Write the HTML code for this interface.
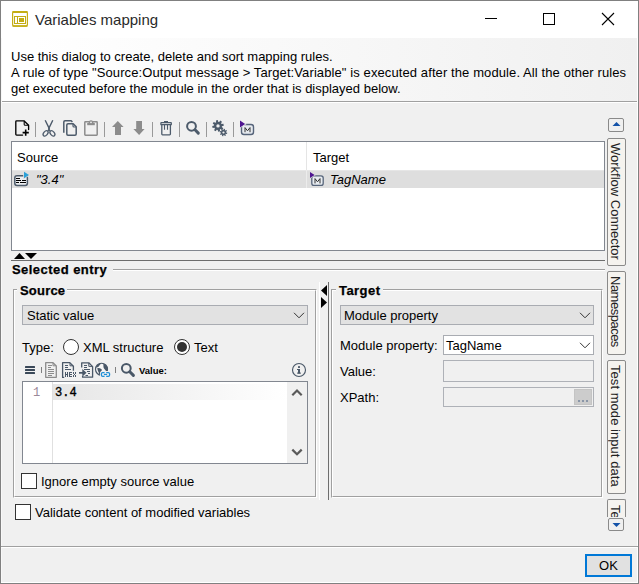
<!DOCTYPE html>
<html><head><meta charset="utf-8">
<style>
*{margin:0;padding:0;box-sizing:border-box}
html,body{width:639px;height:584px;overflow:hidden;background:#f0f0f0}
body{position:relative;font-family:"Liberation Sans",sans-serif;font-size:13px;color:#000}
.a{position:absolute}
.t{position:absolute;white-space:pre;line-height:16px;font-size:13px}
.b{font-weight:bold;letter-spacing:0.45px;-webkit-text-stroke:0.25px #000}
.hl{position:absolute;height:1px}
.vl{position:absolute;width:1px}
svg{position:absolute;overflow:visible}
.tab{position:absolute;left:607px;width:19px;background:#f5f3ef;border:1px solid #8a8a8a;border-radius:2px;overflow:hidden}
.tabtxt{position:absolute;white-space:pre;font-size:13px;line-height:16px;transform-origin:0 0;transform:rotate(90deg);color:#222}
</style></head><body>
<!-- window frame -->
<div class="a" style="left:0;top:0;width:639px;height:584px;border:1px solid #808080"></div>
<div class="a" style="left:1px;top:1px;width:637px;height:37px;background:#fff"></div>
<!-- title icon -->
<svg style="left:0;top:0" width="40" height="40">
  <rect x="12.6" y="11.6" width="14.8" height="14.6" rx="1.6" fill="#fff" stroke="#c4ad14" stroke-width="1.2"/>
  <rect x="12.3" y="11" width="15.4" height="2" rx="0.8" fill="#c4ad14"/>
  <rect x="12.3" y="25.2" width="15.4" height="1.6" rx="0.8" fill="#c4ad14"/>
  <rect x="14.5" y="16.5" width="11" height="7" fill="none" stroke="#c4ad14" stroke-width="1"/>
  <rect x="17" y="16" width="1" height="8" fill="#c4ad14"/>
  <rect x="19" y="18" width="5" height="4" fill="#c4ad14"/>
</svg>
<div class="t" style="left:35px;top:11px;font-size:15px;line-height:18px;color:#2a2a2a">Variables mapping</div>
<!-- title buttons -->
<div class="hl" style="left:485px;top:18px;width:12px;background:#000"></div>
<div class="a" style="left:543px;top:13px;width:12px;height:12px;border:1px solid #000"></div>
<svg style="left:0;top:0" width="639" height="40">
  <path d="M602 13 L614 25 M614 13 L602 25" stroke="#000" stroke-width="1.1"/>
</svg>
<!-- description -->
<div class="a" style="left:1px;top:38px;width:637px;height:63px;background:linear-gradient(to right,#fff 0%,#fff 5%,#f0f0f0 100%)"></div>
<div class="t" style="left:11px;top:49px">Use this dialog to create, delete and sort mapping rules.</div>
<div class="t" style="left:11px;top:65px;letter-spacing:0.1px">A rule of type "Source:Output message &gt; Target:Variable" is executed after the module. All the other rules</div>
<div class="t" style="left:11px;top:81px">get executed before the module in the order that is displayed below.</div>
<div class="hl" style="left:1px;top:101px;width:637px;background:#a0a0a0"></div>
<div class="hl" style="left:1px;top:102px;width:637px;background:#fff"></div>
<div class="vl" style="left:1px;top:38px;height:545px;background:#f8f8f8"></div>
<div class="vl" style="left:637px;top:38px;height:545px;background:#fff"></div>
<div class="hl" style="left:1px;top:582px;width:637px;background:#fff"></div>

<!-- main toolbar -->
<svg style="left:0;top:0" width="639" height="150">
  <g fill="none" stroke="#000" stroke-width="1.35" stroke-linecap="round" stroke-linejoin="round">
    <path d="M22.6 135.1 H16.6 Q15.8 135.1 15.8 134.3 V121.7 Q15.8 120.9 16.6 120.9 H24.2 L28.6 125.3 V129.6"/>
    <path d="M24.2 121.2 V124.4 Q24.2 125.3 25.1 125.3 H28.3" stroke-width="1.1"/>
    <path d="M22.6 132.6 H28.8 M25.7 129.4 V135.8" stroke-linecap="butt" stroke-width="1.6"/>
  </g>
  <g fill="#999"><rect x="35" y="122" width="1" height="15"/><rect x="104" y="122" width="1" height="15"/><rect x="152" y="122" width="1" height="15"/><rect x="179" y="122" width="1" height="15"/><rect x="206" y="122" width="1" height="15"/><rect x="233" y="122" width="1" height="15"/></g>
  <g fill="none" stroke="#4d5b6b" stroke-width="1.5">
    <path d="M45.2 120.3 L49.3 128.6 L48 131 M52.8 120.3 L48.7 128.6 L50 131" stroke-width="1.4"/>
    <ellipse cx="45.6" cy="133.4" rx="1.9" ry="3.1" transform="rotate(40 45.6 133.4)" stroke-width="1.3"/>
    <ellipse cx="52.4" cy="133.4" rx="1.9" ry="3.1" transform="rotate(-40 52.4 133.4)" stroke-width="1.3"/>
    <path d="M63.8 132.8 V122 Q63.8 120.8 65 120.8 H71.2 L72.4 122" stroke-linejoin="round"/>
    <path d="M66.8 134 V125 Q66.8 123.8 68 123.8 H73.2 L76.2 126.8 V134 Q76.2 135.2 75 135.2 H68 Q66.8 135.2 66.8 134 Z" stroke-linejoin="round"/>
    <path d="M73 124 V126 Q73 127 74 127 H76" stroke-width="1.2"/>
  </g>
  <g fill="none" stroke="#8c8c8c" stroke-width="1.5">
    <rect x="84.8" y="121.8" width="12.4" height="13.4" rx="0.6"/>
  </g>
  <g fill="#8c8c8c">
    <rect x="87.2" y="123" width="7.6" height="2.2"/>
    <path d="M88.6 123.2 Q88.6 120.2 91 120.2 Q93.4 120.2 93.4 123.2 Z"/>
    <path d="M112 127 L117.8 121 L123.6 127 H121 V135 H115 V127 Z"/>
    <path d="M136.2 121 H142 V129 H144.6 L139.1 135 L133.4 129 H136.2 Z"/>
  </g>
  <circle cx="91" cy="122.3" r="0.9" fill="#f0f0f0"/>
  <g fill="none" stroke="#4d5b6b" stroke-width="1.5">
    <rect x="160.9" y="122.7" width="10.4" height="2" rx="0.3" stroke-width="1.25"/>
    <path d="M161.8 125 V134.1 Q161.8 134.8 162.5 134.8 H169.7 Q170.4 134.8 170.4 134.1 V125" stroke-width="1.3"/>
    <path d="M164.5 125 V129.8 M167.5 125 V129.8" stroke-width="1.1"/>
  </g>
  <rect x="164" y="121" width="4" height="1.4" fill="#4d5b6b"/>
  <g fill="none" stroke="#4d5b6b">
    <circle cx="191.5" cy="126.3" r="4.4" stroke-width="2"/>
    <path d="M195 129.8 L198.3 133.1" stroke-width="3" stroke-linecap="round"/>
  </g>
  <g fill="#4d5b6b">
    <path d="M221.54 124.04 L223.42 123.83 L223.80 125.70 L221.99 126.24 L221.82 127.08 L223.29 128.27 L222.24 129.85 L220.58 128.96 L219.86 129.44 L220.07 131.32 L218.20 131.70 L217.66 129.89 L216.82 129.72 L215.63 131.19 L214.05 130.14 L214.94 128.48 L214.46 127.76 L212.58 127.97 L212.20 126.10 L214.01 125.56 L214.18 124.72 L212.71 123.53 L213.76 121.95 L215.42 122.84 L216.14 122.36 L215.93 120.48 L217.80 120.10 L218.34 121.91 L219.18 122.08 L220.37 120.61 L221.95 121.66 L221.06 123.32 Z"/>
    <path d="M226.10 132.41 L227.29 132.82 L226.98 134.03 L225.74 133.83 L225.40 134.27 L225.95 135.41 L224.88 136.04 L224.14 135.02 L223.59 135.10 L223.18 136.29 L221.97 135.98 L222.17 134.74 L221.73 134.40 L220.59 134.95 L219.96 133.88 L220.98 133.14 L220.90 132.59 L219.71 132.18 L220.02 130.97 L221.26 131.17 L221.60 130.73 L221.05 129.59 L222.12 128.96 L222.86 129.98 L223.41 129.90 L223.82 128.71 L225.03 129.02 L224.83 130.26 L225.27 130.60 L226.41 130.05 L227.04 131.12 L226.02 131.86 Z"/>
  </g>
  <circle cx="218" cy="125.9" r="1.7" fill="#f0f0f0"/>
  <circle cx="223.5" cy="132.5" r="1.1" fill="#f0f0f0"/>
  <rect x="241.5" y="124.5" width="12" height="10" rx="2.5" fill="#e6eaef" stroke="#56647a" stroke-width="1.4"/>
  <path d="M245 132.2 V127.6 L247.5 130.8 L250 127.6 V132.2" fill="none" stroke="#333" stroke-width="1"/>
  <path d="M239.4 119.6 L246.6 124 L239.4 128.6 Z" fill="#f0f0f0"/>
  <path d="M240 120.6 L245.2 124 L240 127.4 Z" fill="#4e1590"/>
</svg>

<!-- table -->
<div class="a" style="left:11px;top:141px;width:594px;height:110px;background:#fff;border:1px solid #828790"></div>
<div class="vl" style="left:306px;top:142px;height:46px;background:#e5e5e5"></div>
<div class="a" style="left:12px;top:170px;width:592px;height:18px;background:#dedede;border-top:1px solid #e6e6e6"></div>
<div class="vl" style="left:306px;top:170px;height:18px;background:#ececec"></div>
<div class="t" style="left:17px;top:150px">Source</div>
<div class="t" style="left:313px;top:150px">Target</div>
<svg style="left:0;top:0" width="639" height="200">
  <rect x="14.8" y="175.8" width="12.6" height="9.6" rx="2.2" fill="#eceef1" stroke="#4d5b6b" stroke-width="1.5"/>
  <g fill="#000"><rect x="16" y="178" width="4" height="1"/><rect x="16" y="180" width="5" height="1"/><rect x="22" y="180" width="4" height="1"/><rect x="16" y="182" width="3" height="1"/><rect x="20" y="182" width="6" height="1"/></g>
  <path d="M23.2 170.8 L30.4 175 L23.2 179.2 Z" fill="#dedede"/>
  <path d="M24 171.8 L29 175 L24 178.2 Z" fill="#2aa0d8"/>
  <rect x="311.8" y="175.8" width="11.4" height="9.6" rx="2.2" fill="#e8ecf0" stroke="#56647a" stroke-width="1.3"/>
  <path d="M315 183.4 V178.6 L317.5 181.8 L320 178.6 V183.4" fill="none" stroke="#333" stroke-width="1"/>
  <path d="M309.4 171 L315.8 175 L309.4 179 Z" fill="#dedede"/>
  <path d="M310 172 L314.6 175 L310 178 Z" fill="#4e1590"/>
</svg>
<div class="t" style="left:36px;top:172px;font-style:italic">"3.4"</div>
<div class="t" style="left:330px;top:172px;font-style:italic">TagName</div>

<!-- side tabs -->
<div class="a" style="left:608px;top:118px;width:16px;height:14px;border:1px solid #8a8a8a;border-radius:2px;background:#f0f0f0"></div>
<svg style="left:0;top:0" width="639" height="584">
  <path d="M612.5 126 L616.5 122 L620.5 126 Z" fill="#1352a8"/>
</svg>
<div class="tab" style="top:138px;height:128px"><div class="tabtxt" style="left:15px;top:4px">Workflow Connector</div></div>
<div class="tab" style="top:271px;height:84px"><div class="tabtxt" style="left:15px;top:4px;letter-spacing:-0.5px">Namespaces</div></div>
<div class="tab" style="top:360px;height:134px"><div class="tabtxt" style="left:15px;top:4px;letter-spacing:0.05px">Test mode input data</div></div>
<div class="tab" style="top:499px;height:18px;border-bottom:none;border-radius:2px 2px 0 0"><div class="tabtxt" style="left:15px;top:5px">Te</div></div>
<div class="a" style="left:608px;top:518px;width:16px;height:13px;border:1px solid #8a8a8a;border-radius:2px;background:#f0f0f0"></div>
<svg style="left:0;top:0" width="639" height="584">
  <path d="M612.5 523 L616.5 527 L620.5 523 Z" fill="#1352a8"/>
</svg>

<!-- splitter -->
<svg style="left:0;top:0" width="639" height="584">
  <path d="M14 259 L19.5 253 L25 259 Z" fill="#000"/>
  <path d="M25 253 L37 253 L31 259 Z" fill="#000"/>
</svg>
<div class="hl" style="left:11px;top:260px;width:594px;background:#6d6d6d"></div>
<div class="t b" style="left:12px;top:262px">Selected entry</div>
<div class="hl" style="left:113px;top:269px;width:492px;background:#a0a0a0"></div>
<div class="hl" style="left:113px;top:270px;width:492px;background:#fff"></div>

<!-- source group -->
<div class="a" style="left:13px;top:289px;width:304px;height:209px;border:1px solid #a0a0a0;border-right-color:#fff;border-bottom-color:#fff;"></div>
<div class="a" style="left:14px;top:290px;width:302px;height:207px;border:1px solid #fff;border-right-color:#a0a0a0;border-bottom-color:#a0a0a0;"></div>
<div class="a" style="left:17px;top:284px;width:50px;height:10px;background:#f0f0f0"></div>
<div class="t b" style="left:20px;top:283px;letter-spacing:0.2px">Source</div>

<!-- vertical splitter -->
<div class="vl" style="left:319px;top:282px;height:218px;background:#fff"></div>
<div class="vl" style="left:328px;top:282px;height:218px;background:#6d6d6d"></div>
<svg style="left:0;top:0" width="639" height="584">
  <path d="M327 285 L321 290.5 L327 296 Z" fill="#000"/>
  <path d="M321 297 L327 302.5 L321 308 Z" fill="#000"/>
</svg>

<!-- target group -->
<div class="a" style="left:331px;top:289px;width:272px;height:209px;border:1px solid #a0a0a0;border-right-color:#fff;border-bottom-color:#fff;"></div>
<div class="a" style="left:332px;top:290px;width:270px;height:207px;border:1px solid #fff;border-right-color:#a0a0a0;border-bottom-color:#a0a0a0;"></div>
<div class="a" style="left:336px;top:284px;width:47px;height:10px;background:#f0f0f0"></div>
<div class="t b" style="left:339px;top:283px">Target</div>

<!-- source combobox -->
<div class="a" style="left:22px;top:305px;width:286px;height:20px;background:#e2e2e2;border:1px solid #a9acb2"></div>
<div class="t" style="left:27px;top:308px">Static value</div>
<svg style="left:0;top:0" width="639" height="584">
  <path d="M294 312.8 L299 317.8 L304 312.8" fill="none" stroke="#333" stroke-width="1"/>
</svg>

<!-- type row -->
<div class="t" style="left:22px;top:340px">Type:</div>
<svg style="left:0;top:0" width="639" height="584">
  <circle cx="71" cy="347" r="7.5" fill="#fff" stroke="#333" stroke-width="1"/>
  <circle cx="182" cy="347" r="7.5" fill="#fff" stroke="#333" stroke-width="1"/>
  <circle cx="182" cy="347" r="5" fill="#333"/>
</svg>
<div class="t" style="left:83px;top:340px">XML structure</div>
<div class="t" style="left:194px;top:340px">Text</div>

<!-- editor toolbar -->
<svg style="left:0;top:0" width="639" height="584">
  <g fill="#3a4858"><rect x="25" y="366" width="10" height="2" rx="0.5"/><rect x="25" y="369" width="10" height="2" rx="0.5"/><rect x="25" y="372" width="10" height="2" rx="0.5"/></g>
  <rect x="41" y="367" width="1" height="6" fill="#808080"/>
  <rect x="115" y="367" width="1" height="6" fill="#808080"/>
  <g fill="none" stroke="#8c8c8c" stroke-width="1.3" stroke-linejoin="round">
    <path d="M45.7 362.7 H53 L56.3 366 V377.3 H45.7 Z"/>
    <path d="M53 362.9 V365.8 H56.1" stroke-width="1"/>
  </g>
  <g fill="#8c8c8c"><rect x="48" y="365" width="4" height="1"/><rect x="48" y="367" width="3" height="1"/><rect x="48" y="369" width="6" height="1"/><rect x="48" y="371" width="6" height="1"/><rect x="48" y="373" width="6" height="1"/><rect x="48" y="375" width="4" height="1"/></g>
  <g fill="none" stroke="#4a5868" stroke-width="1.3" stroke-linejoin="round">
    <path d="M64.2 377.4 H62.6 V362.6 H69.8 L73.4 366.2 V370.8"/>
    <path d="M70 362.9 V365.8 H73.1" stroke-width="1"/>
    <path d="M81.7 367.6 V362.8 H88.8 L92.6 366.6 V377.2 H82.6 V375.9"/>
    <path d="M88.8 363 V366.4 H92.4" stroke-width="1"/>
  </g>
  <g fill="#4a5868">
    <rect x="65" y="365" width="3" height="1"/><rect x="65" y="367" width="3" height="1"/><rect x="65" y="369" width="6" height="1"/>
    <rect x="65" y="372" width="1" height="5"/><rect x="67" y="372" width="1" height="5"/><rect x="66" y="374" width="1" height="1"/>
    <rect x="69" y="372" width="1" height="5"/><rect x="70" y="372" width="2" height="1"/><rect x="70" y="374" width="2" height="1"/><rect x="70" y="376" width="2" height="1"/>
    <rect x="73" y="372" width="1" height="2"/><rect x="75" y="372" width="1" height="2"/><rect x="74" y="374" width="1" height="1"/><rect x="73" y="375" width="1" height="2"/><rect x="75" y="375" width="1" height="2"/>
    <rect x="84" y="365" width="3" height="1"/><rect x="84" y="367" width="3" height="1"/><rect x="84" y="369" width="6" height="1"/><rect x="87" y="371" width="3" height="1"/><rect x="88" y="373" width="2" height="1"/><rect x="85.5" y="375" width="2.5" height="1"/>
    <rect x="79" y="372" width="4" height="1.7"/>
    <path d="M82.3 369 L86.5 372.85 L82.3 376.7 Z"/>
  </g>
  <circle cx="101.5" cy="369.25" r="6" fill="#f6f6f6" stroke="#4a5868" stroke-width="1.2"/>
  <g fill="#4a5868">
    <path d="M95.8 367.6 Q96.5 364.5 99.8 363.2 L100.4 364.7 Q98.6 365.6 98.4 367 Q97 367.4 95.8 367.6 Z"/>
    <path d="M103.2 363.6 Q107 364.6 107.8 368.5 L107.6 371.5 L106.3 371.8 Q105.6 369.8 104.6 369.2 Q103.4 368 103.4 366.2 Q103.6 365 103.2 363.6 Z"/>
    <path d="M97.2 368.2 Q99.5 367.8 101.8 369.4 Q102.2 370.6 100.8 371.4 Q100 373 99.6 375.2 Q98.6 375 98.8 372.6 Q97.8 371 97.2 368.2 Z"/>
  </g>
  <rect x="100" y="371" width="11.2" height="7" rx="2.5" fill="#f0f0f0"/>
  <g fill="none" stroke="#1e8fd8" stroke-width="1.25">
    <path d="M104.6 372.5 H102.7 Q101.4 372.5 101.4 373.8 V375.1 Q101.4 376.4 102.7 376.4 H104.6"/>
    <path d="M106.2 372.5 H108.3 Q109.6 372.5 109.6 373.8 V375.1 Q109.6 376.4 108.3 376.4 H106.2"/>
    <path d="M103.9 374.45 H107.1"/>
  </g>
  <g fill="none" stroke="#4a5868">
    <circle cx="126.3" cy="368.3" r="4.4" stroke-width="2"/>
    <path d="M129.8 371.8 L133.4 375.4" stroke-width="3" stroke-linecap="round"/>
  </g>
  <circle cx="299" cy="370" r="6.5" fill="none" stroke="#4a5868" stroke-width="1.15"/>
  <g fill="#4a5868"><rect x="298" y="369" width="2" height="4.6"/><rect x="297" y="369" width="1" height="1"/><rect x="297" y="372.6" width="4" height="1"/><rect x="298" y="366" width="2" height="2" rx="0.4"/></g>
</svg>
<div class="t" style="left:139px;top:365px;font-size:9.5px;line-height:12px;font-weight:bold">Value:</div>

<!-- editor -->
<div class="a" style="left:22px;top:381px;width:286px;height:83px;background:#fff;border:1px solid #828790"></div>
<div class="vl" style="left:52px;top:382px;height:81px;background:#e0e0e0"></div>
<div class="a" style="left:53px;top:384px;width:234px;height:16px;background:linear-gradient(to right,#e6e6e6,#fff)"></div>
<div class="a" style="left:287px;top:382px;width:20px;height:81px;background:#f0f0f0"></div>
<div class="t" style="left:33px;top:385px;font-family:'Liberation Mono';font-size:12px;color:#9a8898">1</div>
<div class="t" style="left:55px;top:385px;font-family:'Liberation Mono';font-size:12px;-webkit-text-stroke:0.35px #000">3.4</div>
<svg style="left:0;top:0" width="639" height="584">
  <path d="M292.3 395.2 L297 390.5 L301.7 395.2" fill="none" stroke="#5a5a5a" stroke-width="2.2"/>
  <path d="M292.3 449.6 L297 454.3 L301.7 449.6" fill="none" stroke="#5a5a5a" stroke-width="2.2"/>
</svg>

<!-- ignore checkbox -->
<div class="a" style="left:21px;top:473px;width:16px;height:16px;background:#fff;border:1px solid #333"></div>
<div class="t" style="left:41px;top:474px">Ignore empty source value</div>

<!-- target content -->
<div class="a" style="left:340px;top:305px;width:254px;height:20px;background:#e2e2e2;border:1px solid #a9acb2"></div>
<div class="t" style="left:344px;top:308px">Module property</div>
<div class="t" style="left:340px;top:338px">Module property:</div>
<div class="t" style="left:340px;top:364px">Value:</div>
<div class="t" style="left:340px;top:390px">XPath:</div>
<div class="a" style="left:443px;top:335px;width:151px;height:20px;background:#fff;border:1px solid #a9acb2"></div>
<div class="t" style="left:446px;top:338px">TagName</div>
<div class="a" style="left:443px;top:360px;width:151px;height:22px;border:1px solid #aeb1b7"></div>
<div class="a" style="left:443px;top:387px;width:151px;height:20px;border:1px solid #aeb1b7"></div>
<div class="a" style="left:574px;top:389px;width:18px;height:16px;background:#cccccc;border:1px solid #c4c4c4"></div>
<svg style="left:0;top:0" width="639" height="584">
  <path d="M580 312.8 L585 317.8 L590 312.8" fill="none" stroke="#333" stroke-width="1"/>
  <path d="M580 342.8 L585 347.8 L590 342.8" fill="none" stroke="#333" stroke-width="1"/>
  <rect x="578" y="400" width="2" height="2" fill="#8a96a8"/>
  <rect x="582" y="400" width="2" height="2" fill="#8a96a8"/>
  <rect x="586" y="400" width="2" height="2" fill="#8a96a8"/>
</svg>

<!-- validate -->
<div class="a" style="left:15px;top:504px;width:16px;height:16px;background:#fff;border:1px solid #333"></div>
<div class="t" style="left:35px;top:505px">Validate content of modified variables</div>

<!-- bottom -->
<div class="hl" style="left:1px;top:546px;width:637px;background:#a0a0a0"></div>
<div class="hl" style="left:1px;top:547px;width:637px;background:#fff"></div>
<div class="a" style="left:585px;top:554px;width:47px;height:23px;background:#e1e1e1;border:2px solid #0078d7"></div>
<div class="t" style="left:585px;top:558px;width:47px;text-align:center">OK</div>
</body></html>
